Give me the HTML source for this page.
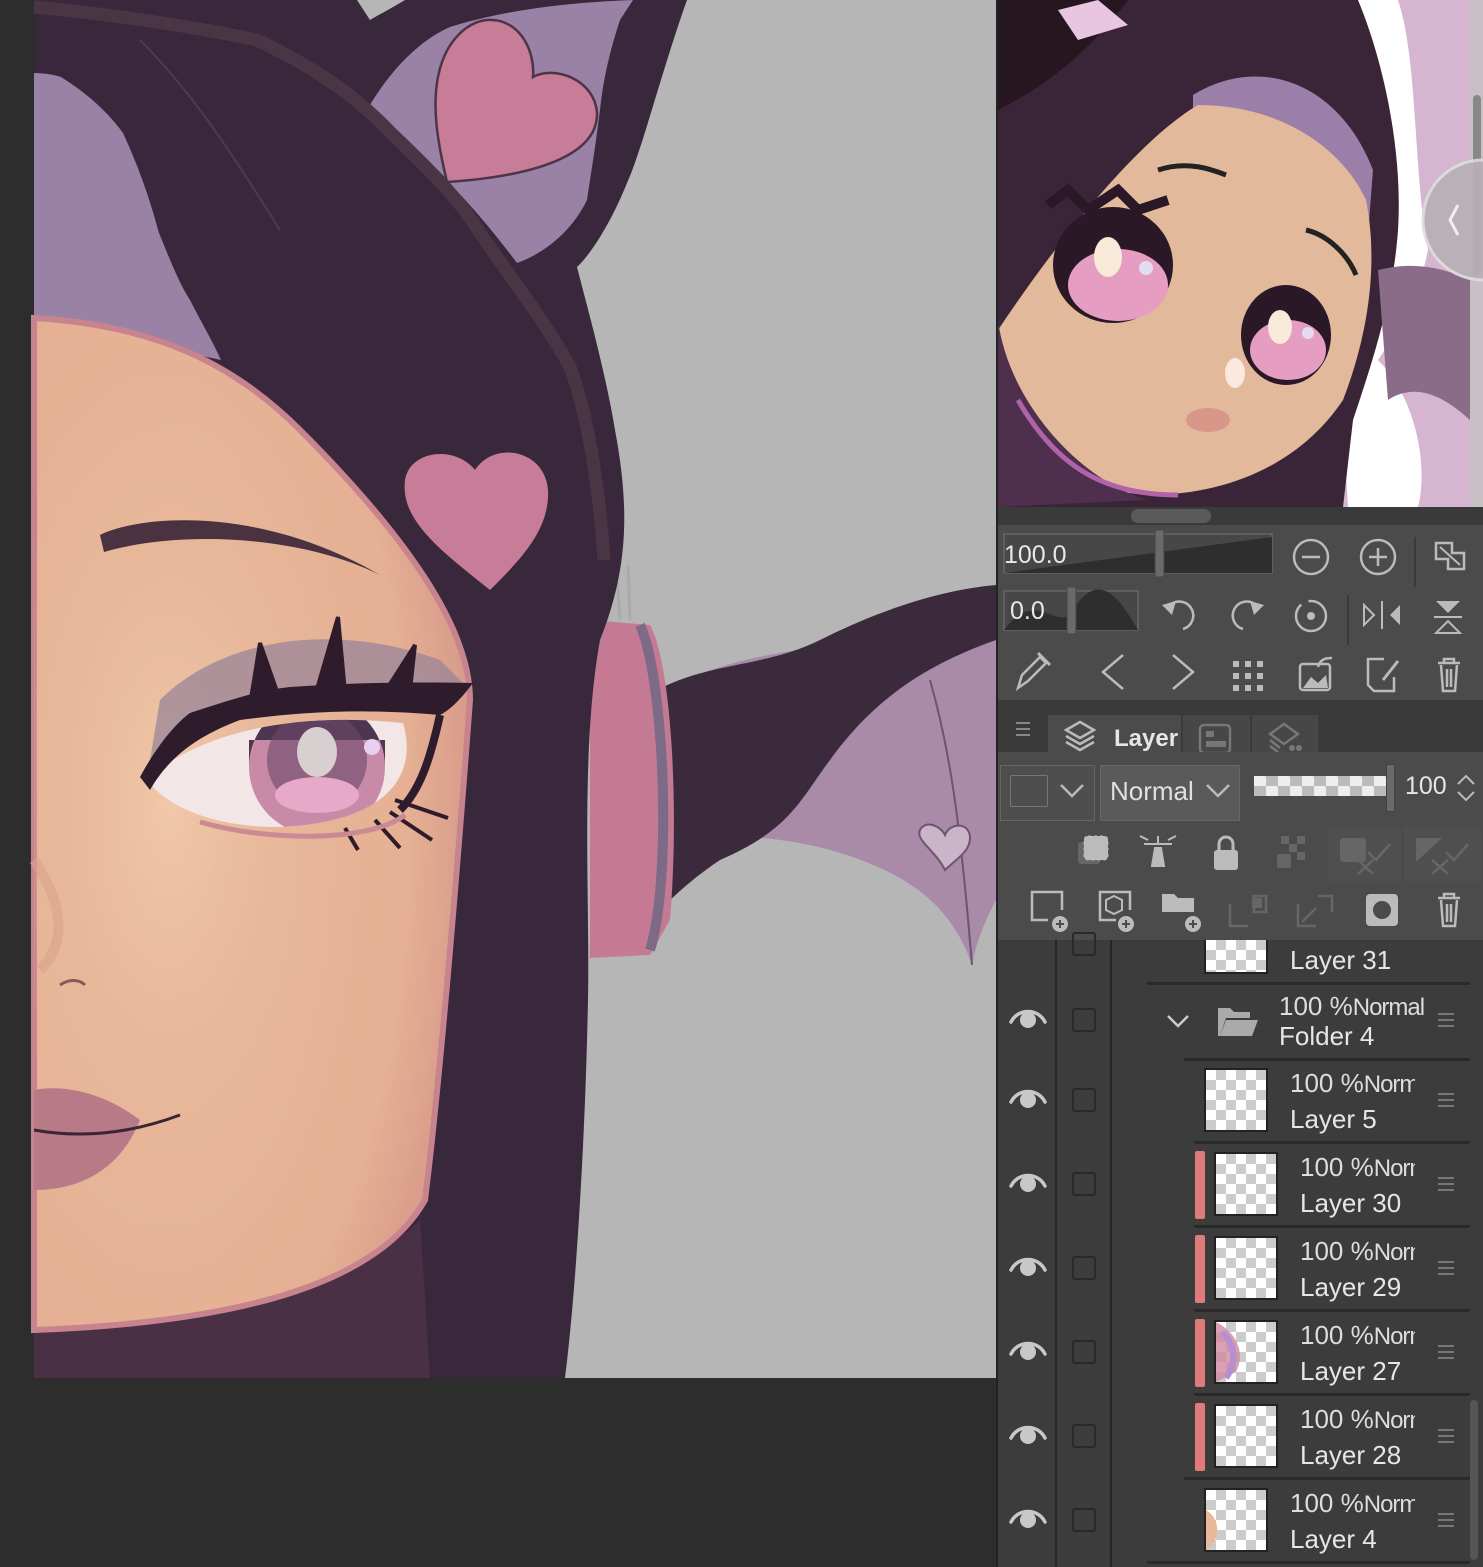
<!DOCTYPE html>
<html><head><meta charset="utf-8"><style>
*{margin:0;padding:0;box-sizing:border-box}
body{width:1483px;height:1567px;background:#2d2d2d;position:relative;overflow:hidden;font-family:"Liberation Sans",sans-serif;color:#ddd}
.abs{position:absolute}
.eye{position:absolute;left:1008px}
.chk{position:absolute;left:1072px;width:24px;height:24px;border:2px solid #2a2a2a;border-radius:3px}
.thumb{position:absolute;width:64px;height:64px;border:2px solid #222;background-color:#fff;background-image:linear-gradient(45deg,#ccc 25%,transparent 25%,transparent 75%,#ccc 75%),linear-gradient(45deg,#ccc 25%,transparent 25%,transparent 75%,#ccc 75%);background-size:20px 20px;background-position:0 0,10px 10px}
.t1{position:absolute;font-size:26px;color:#ddd;white-space:nowrap;overflow:hidden}
.t2{position:absolute;font-size:26px;color:#e6e6e6;white-space:nowrap}
.ham{position:absolute;left:1438px;width:16px;height:14px;border-top:2px solid #777;border-bottom:2px solid #777}
.ham:after{content:"";position:absolute;left:0;right:0;top:4px;border-top:2px solid #777}
.red{position:absolute;left:1195px;width:10px;height:68px;background:#e07b7b;border-radius:2px}
.sep{position:absolute;height:3px;background:#2a2a2a}
</style></head><body>

<svg class="abs" style="left:0;top:0" width="998" height="1567" viewBox="0 0 998 1567">
<defs>
<radialGradient id="sk" cx="0.3" cy="0.5" r="0.8"><stop offset="0" stop-color="#eabc9e"/><stop offset="0.7" stop-color="#e5b093"/><stop offset="1" stop-color="#cf8d85"/></radialGradient>
<radialGradient id="sk2" cx="0.35" cy="0.45" r="0.45"><stop offset="0" stop-color="#f0c8a8"/><stop offset="1" stop-color="#e6b094" stop-opacity="0"/></radialGradient>
<clipPath id="eyeclip"><path d="M147,780 C200,730 300,712 403,723 C420,780 380,825 273,827 C210,826 165,805 147,780Z"/></clipPath>
</defs>
<rect x="34" y="0" width="962" height="1378" fill="#b6b6b6"/>
<path d="M650,700 C720,650 850,640 960,640 L996,630 L996,900 C980,930 975,950 972,965 C950,900 900,870 830,850 C760,830 690,840 650,820 Z" fill="#a98aa8"/>
<path d="M930,680 C950,750 960,820 972,965" stroke="#6d5470" stroke-width="2" fill="none"/>
<path d="M945,870 C935,850 915,840 920,830 C925,820 940,825 945,835 C950,822 970,822 970,838 C970,852 955,860 945,870Z" fill="#c9b4c8" stroke="#6d5470" stroke-width="2"/>
<path d="M640,700 C700,660 760,670 820,640 C880,610 940,590 996,585 L996,640 C940,660 880,690 830,760 C800,800 790,830 720,860 C690,880 670,900 660,910 Z" fill="#3a2a3b"/>
<path d="M590,620 L650,625 C670,660 680,800 670,920 L650,955 L590,958 Z" fill="#c47a92"/>
<path d="M640,625 C665,680 672,880 650,950" stroke="#7d6a86" stroke-width="10" fill="none"/>
<path d="M604,560 L608,620 M616,560 L620,620 M628,565 L630,620" stroke="#aaa" stroke-width="3"/>
<!-- hair main -->
<path d="M34,0 L687,0 C662,70 642,150 627,183 C610,225 590,255 577,267 C588,310 605,370 615,430 C630,510 628,570 600,640 C580,750 590,900 588,1000 C585,1150 575,1300 565,1378 L34,1378 Z" fill="#39283b"/>
<path d="M357,0 L405,0 C392,8 380,14 370,20 Z" fill="#b6b6b6"/>
<path d="M34,1378 L34,1330 C200,1320 350,1290 420,1220 L430,1378Z" fill="#4a3044"/>
<!-- cat ear interior -->
<path d="M367,110 C390,70 420,40 450,27 C510,8 580,2 633,0 L620,20 C610,50 603,80 600,110 C595,150 590,180 587,200 C570,235 540,255 517,263 C470,200 420,150 367,110Z" fill="#9982a6"/>
<path d="M447,182 C437,140 433,110 437,83 C443,40 470,18 493,20 C520,22 535,50 533,77 C555,65 595,80 597,113 C598,150 550,175 447,182Z" fill="#c77d98" stroke="#4d3448" stroke-width="2.5"/>
<!-- lavender top-left -->
<path d="M34,73 C45,73 55,75 61,77 C90,95 110,115 123,133 C140,170 150,200 159,233 C170,260 180,285 190,300 C200,320 212,340 221,360 L34,320 Z" fill="#9a82a6"/>
<path d="M140,40 C190,90 230,150 280,230" stroke="#4d3a50" stroke-width="2" fill="none"/>
<!-- headband -->
<path d="M34,7 C120,15 200,28 257,40 C320,70 360,100 391,133 C430,170 460,200 480,233 C520,290 550,330 570,367 C590,420 600,500 604,560" stroke="#4a3545" stroke-width="13" fill="none"/>
<!-- skin -->
<path d="M34,318 C150,325 230,360 300,430 C410,540 470,630 470,700 C455,900 440,1080 425,1200 C380,1280 250,1322 34,1330 Z" fill="url(#sk)" stroke="#c8848e" stroke-width="6"/>
<path d="M34,400 C200,420 350,500 420,640 C430,850 420,1050 400,1180 C300,1260 150,1290 34,1300Z" fill="url(#sk2)"/>
<path d="M490,590 C440,550 400,520 405,480 C410,450 455,445 475,470 C495,440 545,450 548,490 C550,530 520,560 490,590Z" fill="#c77d98"/>
<path d="M100,535 C140,515 260,505 380,575 C300,535 180,530 104,552Z" fill="#4a3240"/>
<path d="M160,700 C220,640 330,620 440,660 L470,690 C360,690 250,700 150,760Z" fill="#9a8498" opacity="0.75"/>
<path d="M147,780 C200,730 300,712 403,723 C420,780 380,825 273,827 C210,826 165,805 147,780Z" fill="#f2e6e6"/>
<g clip-path="url(#eyeclip)">
<circle cx="317" cy="767" r="68" fill="#c98aa8"/>
<path d="M249,767 A68,68 0 0 1 385,767 L385,740 L249,740Z" fill="#4e3550"/>
<circle cx="317" cy="760" r="50" fill="#6a4868" opacity="0.6"/>
<ellipse cx="317" cy="795" rx="42" ry="18" fill="#e8a8c8"/>
<ellipse cx="317" cy="752" rx="20" ry="25" fill="#d8d0d0"/>
<circle cx="372" cy="747" r="8" fill="#e8d0f0"/>
</g>
<path d="M140,777 C160,740 180,720 190,713 C230,700 260,690 290,687 C360,682 420,682 473,683 C460,700 450,710 440,715 C360,708 300,712 240,720 C200,735 170,755 150,790Z" fill="#2e1b2c"/>
<path d="M250,705 L260,643 L280,700 M315,696 L338,617 L345,692 M385,692 L415,645 L410,690" fill="#2e1b2c" stroke="#2e1b2c" stroke-width="4"/>
<path d="M440,715 C430,760 420,790 400,810" stroke="#2e1b2c" stroke-width="8" fill="none"/>
<path d="M395,800 L448,818 M390,812 L432,840 M375,820 L400,848 M345,828 L358,850" stroke="#2e1b2c" stroke-width="4" fill="none"/>
<path d="M200,822 C270,842 370,842 405,815" stroke="#c98a94" stroke-width="5" fill="none"/>
<path d="M34,860 C60,900 70,940 40,970" stroke="#d9a18c" stroke-width="10" fill="none" opacity="0.6"/>
<path d="M60,985 C70,978 80,980 85,985" stroke="#8a5a5a" stroke-width="3" fill="none"/>
<path d="M34,1090 C60,1085 100,1090 140,1120 C120,1170 80,1190 34,1190Z" fill="#b87a86"/>
<path d="M34,1130 C90,1140 140,1130 180,1115" stroke="#3a2535" stroke-width="3" fill="none"/>
<rect x="0" y="1378" width="998" height="189" fill="#2d2d2d"/>
</svg>

<svg class="abs" style="left:998px;top:0" width="485" height="507" viewBox="0 0 485 507">
<rect width="485" height="507" fill="#d5b5cf"/>
<path d="M320,0 L400,0 C420,60 415,170 430,250 C420,300 400,330 380,360 C420,400 430,470 420,507 L350,507 Z" fill="#fff"/>
<path d="M0,0 L360,0 C385,60 405,150 400,230 C395,300 375,360 355,420 L345,507 L0,507Z" fill="#3a2438"/>
<path d="M380,270 C420,260 450,270 472,280 L472,420 C450,400 420,380 390,400Z" fill="#8a6c88"/>
<path d="M0,0 L130,0 C100,40 60,80 0,110Z" fill="#25161f"/>
<path d="M60,10 L100,0 L130,25 L80,40Z" fill="#e8c5e0"/>
<path d="M195,95 C260,55 340,80 375,170 L370,235 C330,150 270,105 195,112Z" fill="#9b7fa8"/>
<path d="M0,330 C60,240 140,140 200,105 C285,105 345,150 368,200 C380,260 372,330 345,400 C305,460 235,495 150,495 C70,490 10,440 0,410Z" fill="#e3b99b"/>
<path d="M160,170 C190,160 215,170 228,175" stroke="#222" stroke-width="5" fill="none"/>
<path d="M308,230 C330,235 350,255 358,275" stroke="#222" stroke-width="5" fill="none"/>
<path d="M50,205 L70,190 L90,210 L120,190 L140,210 L170,200" stroke="#2a1826" stroke-width="10" fill="none"/>
<ellipse cx="115" cy="265" rx="60" ry="58" fill="#2a1826"/>
<ellipse cx="120" cy="285" rx="50" ry="36" fill="#e59ec2"/>
<ellipse cx="110" cy="257" rx="14" ry="20" fill="#f7ead8"/>
<circle cx="148" cy="268" r="7" fill="#e4dcf2"/>
<ellipse cx="288" cy="335" rx="45" ry="50" fill="#2a1826"/>
<ellipse cx="290" cy="350" rx="38" ry="30" fill="#e59ec2"/>
<ellipse cx="282" cy="327" rx="12" ry="17" fill="#f7ead8"/>
<circle cx="310" cy="333" r="6" fill="#e4dcf2"/>
<ellipse cx="237" cy="373" rx="10" ry="15" fill="#fbe8e0"/>
<ellipse cx="210" cy="420" rx="22" ry="12" fill="#d9978a"/>
<path d="M0,320 C10,400 80,480 150,500 L0,507Z" fill="#4e2f4e"/>
<path d="M20,400 C60,470 110,495 180,495" stroke="#b063a8" stroke-width="5" fill="none"/>
<rect x="472" y="0" width="13" height="507" fill="#c9c0c6"/>
<rect x="475" y="95" width="8" height="180" rx="4" fill="#888"/>
<circle cx="485" cy="220" r="60" fill="#b8b0b6" stroke="#ddd" stroke-width="3" opacity="0.9"/>
<path d="M460,205 L452,220 L460,235" stroke="#eee" stroke-width="3" fill="none"/>
</svg>

<div class="abs" style="left:996px;top:0;width:2px;height:1567px;background:#222"></div>
<div class="abs" style="left:998px;top:507px;width:485px;height:193px;background:#4b4b4b"></div>
<div class="abs" style="left:998px;top:507px;width:485px;height:18px;background:#3a3a3a"></div>
<div class="abs" style="left:1131px;top:509px;width:80px;height:14px;border-radius:7px;background:#5a5a5a"></div>
<svg class="abs" style="left:998px;top:525px" width="485" height="175" viewBox="0 0 485 175">
<rect x="6" y="9" width="268" height="39" fill="#474747" stroke="#666" stroke-width="1.5"/>
<path d="M6,48 L274,12 L274,48Z" fill="#2e2e2e"/>
<text x="6" y="38" font-family="Liberation Sans" font-size="25" fill="#e8e8e8">100.0</text>
<rect x="157" y="5" width="9" height="47" fill="#6a6a6a" stroke="#444"/>
<circle cx="313" cy="32" r="17" fill="none" stroke="#bbb" stroke-width="2.5"/><path d="M304,32 H322" stroke="#bbb" stroke-width="2.5"/>
<circle cx="380" cy="32" r="17" fill="none" stroke="#bbb" stroke-width="2.5"/><path d="M371,32 H389 M380,23 V41" stroke="#bbb" stroke-width="2.5"/>
<path d="M417,12 V62" stroke="#3a3a3a" stroke-width="2"/>
<path d="M438,18 h16 v10 h12 v16 h-16 v-10 h-12z" fill="none" stroke="#bbb" stroke-width="2.5"/><path d="M442,22 L462,40" stroke="#bbb" stroke-width="2"/>
<rect x="6" y="66" width="134" height="39" fill="#474747" stroke="#666" stroke-width="1.5"/>
<path d="M6,105 C40,60 60,110 75,85 C100,45 120,70 140,105Z" fill="#2e2e2e"/>
<text x="12" y="94" font-family="Liberation Sans" font-size="25" fill="#e8e8e8">0.0</text>
<rect x="69" y="62" width="9" height="47" fill="#6a6a6a" stroke="#444"/>
<path d="M172,80 A14,14 0 1 1 185,104" fill="none" stroke="#bbb" stroke-width="2.5"/><path d="M164,80 L178,76 L174,90Z" fill="#bbb"/>
<path d="M258,80 A14,14 0 1 0 245,104" fill="none" stroke="#bbb" stroke-width="2.5"/><path d="M266,80 L252,76 L256,90Z" fill="#bbb"/>
<circle cx="313" cy="91" r="15" fill="none" stroke="#bbb" stroke-width="2.5" stroke-dasharray="60 8"/><circle cx="313" cy="91" r="4" fill="#bbb"/>
<path d="M350,70 V120" stroke="#3a3a3a" stroke-width="2"/>
<path d="M366,80 L376,90 L366,100Z" fill="none" stroke="#bbb" stroke-width="2"/><path d="M384,76 V104" stroke="#bbb" stroke-width="2"/><path d="M402,80 L392,90 L402,100Z" fill="#bbb"/>
<path d="M438,76 L462,76 L450,88Z" fill="#bbb"/><path d="M436,92 H464" stroke="#bbb" stroke-width="2"/><path d="M438,108 L462,108 L450,96Z" fill="none" stroke="#bbb" stroke-width="2"/>
<path d="M20,163 L24,150 L42,132 L48,138 L30,156Z" fill="none" stroke="#bbb" stroke-width="2.5"/><path d="M40,128 L52,140" stroke="#bbb" stroke-width="3"/>
<path d="M125,130 L105,147 L125,164" fill="none" stroke="#bbb" stroke-width="2.5"/>
<path d="M175,130 L195,147 L175,164" fill="none" stroke="#bbb" stroke-width="2.5"/>
<g fill="#bbb"><rect x="235" y="136" width="6" height="6"/><rect x="247" y="136" width="6" height="6"/><rect x="259" y="136" width="6" height="6"/><rect x="235" y="148" width="6" height="6"/><rect x="247" y="148" width="6" height="6"/><rect x="259" y="148" width="6" height="6"/><rect x="235" y="160" width="6" height="6"/><rect x="247" y="160" width="6" height="6"/><rect x="259" y="160" width="6" height="6"/></g>
<rect x="302" y="139" width="30" height="26" rx="3" fill="none" stroke="#bbb" stroke-width="2.5"/><path d="M305,163 L313,152 L320,158 L328,150 L330,163Z" fill="#bbb"/><path d="M320,142 C322,134 328,133 334,133" stroke="#bbb" stroke-width="2.5" fill="none"/>
<path d="M386,134 h-16 v26 l6,6 h20 v-14" fill="none" stroke="#bbb" stroke-width="2.5"/><path d="M385,155 L400,136" stroke="#bbb" stroke-width="3"/>
<path d="M440,138 h22 M446,138 v-4 h10 v4 M443,140 l2,26 h12 l2,-26 M449,144 v18 M453,144 v18" fill="none" stroke="#bbb" stroke-width="2.5"/>
</svg>

<div class="abs" style="left:998px;top:700px;width:485px;height:52px;background:#3a3a3a"></div>
<div class="abs" style="left:1016px;top:722px;width:14px;height:14px;border-top:2px solid #888;border-bottom:2px solid #888"></div>
<div class="abs" style="left:1016px;top:728px;width:14px;border-top:2px solid #888"></div>
<div class="abs" style="left:1048px;top:715px;width:133px;height:37px;background:#4b4b4b"></div>
<div class="abs" style="left:1183px;top:715px;width:67px;height:37px;background:#474747"></div>
<div class="abs" style="left:1252px;top:715px;width:66px;height:37px;background:#474747"></div>
<svg class="abs" style="left:1062px;top:718px" width="40" height="40"><path d="M4,12 L18,4 L32,12 L18,20Z M4,18 L18,26 L32,18 M4,24 L18,32 L32,24" fill="none" stroke="#bbb" stroke-width="2.5"/></svg>
<div class="abs" style="left:1114px;top:725px;font-size:24px;font-weight:bold;color:#e6e6e6">Layer</div>
<svg class="abs" style="left:1198px;top:722px" width="36" height="32"><rect x="2" y="3" width="30" height="28" rx="4" fill="none" stroke="#777" stroke-width="2.5"/><rect x="8" y="9" width="8" height="6" fill="#777"/><rect x="8" y="19" width="20" height="6" fill="#777"/></svg>
<svg class="abs" style="left:1266px;top:720px" width="40" height="32"><path d="M4,14 L18,4 L32,14 L18,24Z M4,20 L14,28 M4,26 L12,32" fill="none" stroke="#777" stroke-width="2.5"/><circle cx="26" cy="28" r="3" fill="#777"/><circle cx="33" cy="28" r="3" fill="#777"/></svg>

<div class="abs" style="left:998px;top:752px;width:485px;height:188px;background:#4b4b4b"></div>
<div class="abs" style="left:1000px;top:765px;width:95px;height:56px;border:1.5px solid #666;background:#4e4e4e"></div>
<div class="abs" style="left:1010px;top:775px;width:38px;height:32px;border:1.5px solid #777;border-radius:2px"></div>
<svg class="abs" style="left:1058px;top:780px" width="30" height="20"><path d="M3,5 L14,16 L25,5" fill="none" stroke="#bbb" stroke-width="2.5"/></svg>
<div class="abs" style="left:1100px;top:765px;width:140px;height:56px;border:1.5px solid #666;background:#5a5a5a"></div>
<div class="abs" style="left:1110px;top:776px;font-size:26px;color:#e0e0e0">Normal</div>
<svg class="abs" style="left:1204px;top:780px" width="30" height="20"><path d="M3,5 L14,16 L25,5" fill="none" stroke="#bbb" stroke-width="2.5"/></svg>
<div class="abs" style="left:1254px;top:776px;width:134px;height:20px;background-color:#eee;background-image:linear-gradient(45deg,#bbb 25%,transparent 25%,transparent 75%,#bbb 75%),linear-gradient(45deg,#bbb 25%,transparent 25%,transparent 75%,#bbb 75%);background-size:24px 20px;background-position:0 0,12px 10px"></div>
<div class="abs" style="left:1386px;top:764px;width:9px;height:48px;background:#6a6a6a;border:1px solid #444"></div>
<div class="abs" style="left:1405px;top:772px;font-size:25px;color:#e6e6e6">100</div>
<svg class="abs" style="left:1455px;top:772px" width="22" height="32"><path d="M3,12 L11,4 L19,12 M3,20 L11,28 L19,20" fill="none" stroke="#bbb" stroke-width="2"/></svg>
<svg class="abs" style="left:998px;top:822px" width="485" height="60">
<rect x="80" y="20" width="22" height="22" rx="3" fill="#666"/><rect x="86" y="14" width="24" height="24" rx="4" fill="#bbb" stroke="#bbb" stroke-dasharray="3 3"/>
<path d="M160,14 V22 M146,22 L174,22 M150,18 L142,14 M170,18 L178,14 M157,26 L154,44 H166 L163,26Z" stroke="#bbb" stroke-width="2" fill="#bbb"/>
<rect x="216" y="28" width="24" height="20" rx="3" fill="#bbb"/><path d="M221,28 V22 A7,7 0 0 1 235,22 V28" fill="none" stroke="#bbb" stroke-width="3"/>
<g fill="#666"><rect x="283" y="14" width="8" height="8"/><rect x="299" y="14" width="8" height="8"/><rect x="291" y="22" width="8" height="8"/><rect x="299" y="30" width="8" height="8"/><rect x="279" y="32" width="14" height="14" rx="2"/></g>
<rect x="330" y="5" width="73" height="54" fill="#4f4f4f"/>
<rect x="406" y="5" width="77" height="54" fill="#4f4f4f"/>
<rect x="342" y="16" width="26" height="24" rx="3" fill="#666"/><path d="M360,38 L375,52 M375,38 L360,52 M370,30 L378,38 L392,22" stroke="#666" stroke-width="2.5" fill="none"/>
<path d="M418,16 L444,16 L418,40Z" fill="#666"/><path d="M434,38 L450,52 M450,38 L434,52 M448,30 L456,38 L470,22" stroke="#666" stroke-width="2.5" fill="none"/>
</svg>
<svg class="abs" style="left:998px;top:882px" width="485" height="58">
<path d="M50,38 H34 V10 H64 V28" fill="none" stroke="#bbb" stroke-width="2.5"/><circle cx="62" cy="42" r="8" fill="#bbb"/><path d="M58,42 H66 M62,38 V46" stroke="#4b4b4b" stroke-width="2"/>
<path d="M118,38 H102 V10 H132 V28" fill="none" stroke="#bbb" stroke-width="2.5"/><path d="M108,18 L116,14 L124,18 V28 L116,32 L108,28Z" fill="none" stroke="#bbb" stroke-width="2"/><circle cx="128" cy="42" r="8" fill="#bbb"/><path d="M124,42 H132 M128,38 V46" stroke="#4b4b4b" stroke-width="2"/>
<path d="M164,12 H176 L180,16 H196 V30 H164Z" fill="#bbb"/><circle cx="195" cy="42" r="8" fill="#bbb"/><path d="M191,42 H199 M195,38 V46" stroke="#4b4b4b" stroke-width="2"/>
<path d="M232,22 V44 H250 M256,14 H268 V30 H256Z" fill="none" stroke="#666" stroke-width="2.5"/><rect x="254" y="16" width="10" height="10" fill="#666"/>
<path d="M300,22 V44 H318 M320,14 H334 V30" fill="none" stroke="#666" stroke-width="2.5"/><path d="M304,40 L318,26" stroke="#666" stroke-width="2.5"/>
<rect x="368" y="12" width="32" height="32" rx="4" fill="#bbb"/><circle cx="384" cy="28" r="9" fill="#4b4b4b"/>
<path d="M440,16 h22 M446,16 v-4 h10 v4 M443,18 l2,26 h12 l2,-26 M449,22 v18 M453,22 v18" fill="none" stroke="#bbb" stroke-width="2.5"/>
</svg>

<div class="abs" style="left:998px;top:940px;width:485px;height:627px;background:#3c3c3c"></div>
<div class="abs" style="left:1055px;top:940px;width:2px;height:627px;background:#262626"></div>
<div class="abs" style="left:1110px;top:940px;width:2px;height:627px;background:#262626"></div>
<div class="abs" style="left:1470px;top:1400px;width:8px;height:160px;background:#555;border-radius:4px"></div>

<div class="thumb" style="left:1204px;top:940px;height:34px;border-top:none"></div>
<div class="t2" style="left:1290px;top:945px">Layer 31</div>
<div class="chk" style="top:932px"></div>
<div class="sep" style="left:1147px;top:982px;width:323px"></div>

<svg width="0" height="0" style="position:absolute"><defs><g id="ey"><path d="M3,18 C10,4 30,4 37,18" fill="none" stroke="#c8c8c8" stroke-width="3.5" stroke-linecap="round"/><circle cx="20" cy="16" r="8" fill="#c8c8c8"/></g></defs></svg>

<svg class="eye" style="top:1004px" width="40" height="28"><use href="#ey"/></svg>
<div class="chk" style="top:1008px"></div>
<svg class="abs" style="left:1166px;top:1012px" width="26" height="18"><path d="M2,4 L12,14 L22,4" fill="none" stroke="#ccc" stroke-width="2.5"/></svg>
<svg class="abs" style="left:1216px;top:1004px" width="44" height="34"><path d="M2,4 H14 L18,8 H34 V14 H10 L4,32 H2Z" fill="#aaa"/><path d="M10,16 H42 L36,32 H4Z" fill="#aaa"/></svg>
<div class="t1" style="left:1279px;top:991px">100 %<span style="font-size:24px;letter-spacing:-1px">Normal</span></div>
<div class="t2" style="left:1279px;top:1021px">Folder 4</div>
<div class="ham" style="top:1013px"></div>
<div class="sep" style="left:1184px;top:1058px;width:286px"></div>

<svg class="eye" style="top:1084px" width="40" height="28"><use href="#ey"/></svg>
<div class="chk" style="top:1088px"></div>
<div class="thumb" style="left:1204px;top:1068px"></div>
<div class="t1" style="left:1290px;top:1068px;width:125px">100 %<span style="font-size:24px;letter-spacing:-1px">Normal</span></div>
<div class="t2" style="left:1290px;top:1104px">Layer 5</div>
<div class="ham" style="top:1093px"></div>
<div class="sep" style="left:1194px;top:1141px;width:276px"></div>

<svg class="eye" style="top:1168px" width="40" height="28"><use href="#ey"/></svg>
<div class="chk" style="top:1172px"></div>
<div class="red" style="top:1151px"></div>
<div class="thumb" style="left:1214px;top:1152px"></div>
<div class="t1" style="left:1300px;top:1152px;width:115px">100 %<span style="font-size:24px;letter-spacing:-1px">Normal</span></div>
<div class="t2" style="left:1300px;top:1188px">Layer 30</div>
<div class="ham" style="top:1177px"></div>
<div class="sep" style="left:1194px;top:1225px;width:276px"></div>

<svg class="eye" style="top:1252px" width="40" height="28"><use href="#ey"/></svg>
<div class="chk" style="top:1256px"></div>
<div class="red" style="top:1235px"></div>
<div class="thumb" style="left:1214px;top:1236px"></div>
<div class="t1" style="left:1300px;top:1236px;width:115px">100 %<span style="font-size:24px;letter-spacing:-1px">Normal</span></div>
<div class="t2" style="left:1300px;top:1272px">Layer 29</div>
<div class="ham" style="top:1261px"></div>
<div class="sep" style="left:1194px;top:1309px;width:276px"></div>

<svg class="eye" style="top:1336px" width="40" height="28"><use href="#ey"/></svg>
<div class="chk" style="top:1340px"></div>
<div class="red" style="top:1319px"></div>
<div class="thumb" style="left:1214px;top:1320px"></div>
<svg class="abs" style="left:1216px;top:1322px" width="60" height="60"><path d="M0,0 C20,10 30,30 20,50 L0,60Z" fill="#d08aa0" opacity="0.8"/><path d="M6,10 C18,20 22,40 10,56" stroke="#b58fd0" stroke-width="6" fill="none"/></svg>
<div class="t1" style="left:1300px;top:1320px;width:115px">100 %<span style="font-size:24px;letter-spacing:-1px">Normal</span></div>
<div class="t2" style="left:1300px;top:1356px">Layer 27</div>
<div class="ham" style="top:1345px"></div>
<div class="sep" style="left:1194px;top:1393px;width:276px"></div>

<svg class="eye" style="top:1420px" width="40" height="28"><use href="#ey"/></svg>
<div class="chk" style="top:1424px"></div>
<div class="red" style="top:1403px"></div>
<div class="thumb" style="left:1214px;top:1404px"></div>
<div class="t1" style="left:1300px;top:1404px;width:115px">100 %<span style="font-size:24px;letter-spacing:-1px">Normal</span></div>
<div class="t2" style="left:1300px;top:1440px">Layer 28</div>
<div class="ham" style="top:1429px"></div>
<div class="sep" style="left:1184px;top:1477px;width:286px"></div>

<svg class="eye" style="top:1504px" width="40" height="28"><use href="#ey"/></svg>
<div class="chk" style="top:1508px"></div>
<div class="thumb" style="left:1204px;top:1488px"></div>
<svg class="abs" style="left:1206px;top:1510px" width="20" height="40"><path d="M0,0 C14,8 16,30 0,40Z" fill="#e8b89a"/></svg>
<div class="t1" style="left:1290px;top:1488px;width:125px">100 %<span style="font-size:24px;letter-spacing:-1px">Normal</span></div>
<div class="t2" style="left:1290px;top:1524px">Layer 4</div>
<div class="ham" style="top:1513px"></div>
<div class="sep" style="left:1147px;top:1561px;width:323px"></div>
</body></html>
